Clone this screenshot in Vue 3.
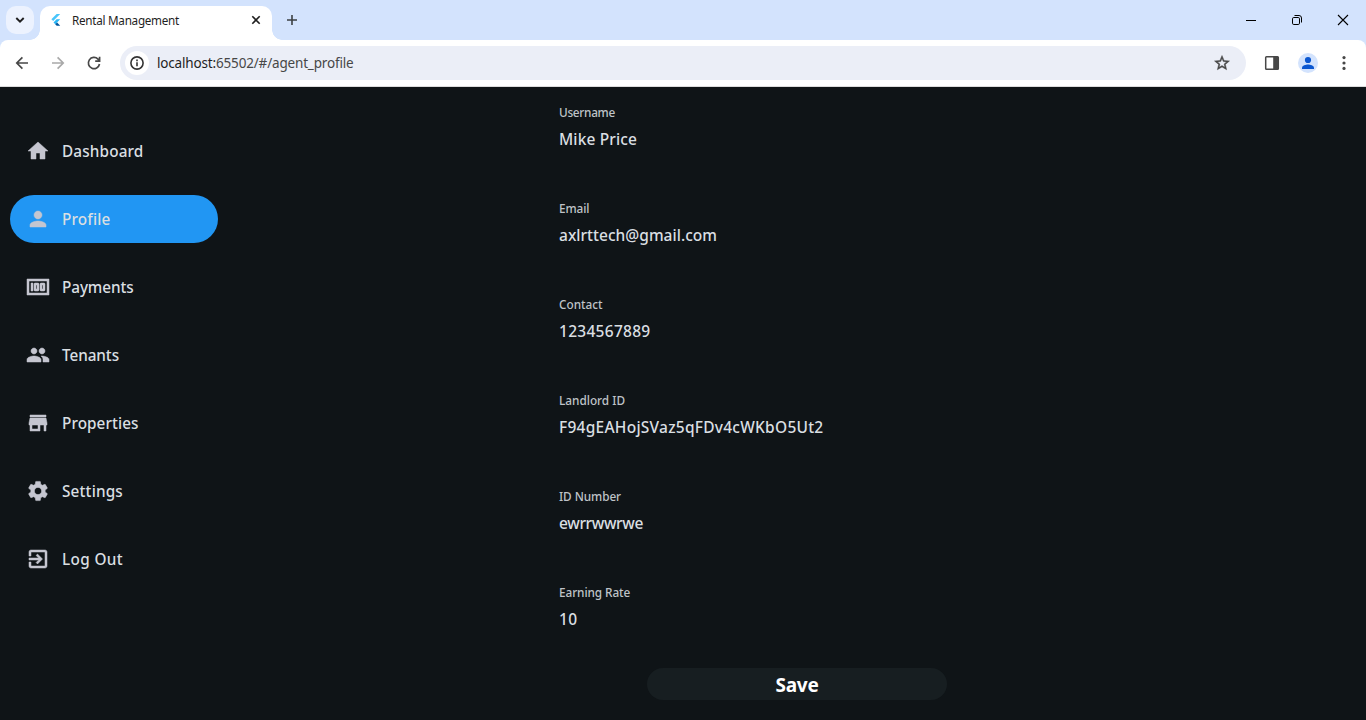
<script setup>
const navItems = [
  { label: 'Dashboard', width: 81.5, icon: 'M10 20v-6h4v6h5v-8h3L12 3 2 12h3v8z' },
  { label: 'Profile', width: 48.5, active: true, icon: 'M12 12c2.21 0 4-1.79 4-4s-1.79-4-4-4-4 1.79-4 4 1.79 4 4 4zm0 2c-2.67 0-8 1.34-8 4v2h16v-2c0-2.66-5.33-4-8-4z' },
  { label: 'Payments', width: 71.5, icon: 'M5 8h2v8H5zm7 0H9c-.55 0-1 .45-1 1v6c0 .55.45 1 1 1h3c.55 0 1-.45 1-1V9c0-.55-.45-1-1-1zm-1 6h-1v-4h1v4zm7-6h-3c-.55 0-1 .45-1 1v6c0 .55.45 1 1 1h3c.55 0 1-.45 1-1V9c0-.55-.45-1-1-1zm-1 6h-1v-4h1v4zM1 4v16h22V4H1zm20 14H3V6h18v12z' },
  { label: 'Tenants', width: 57, icon: 'M16 11c1.66 0 2.99-1.34 2.99-3S17.66 5 16 5s-3 1.34-3 3 1.34 3 3 3zm-8 0c1.66 0 2.99-1.34 2.99-3S9.66 5 8 5 5 6.34 5 8s1.34 3 3 3zm0 2c-2.33 0-7 1.17-7 3.5V19h14v-2.5c0-2.33-4.67-3.5-7-3.5zm8 0c-.29 0-.62.02-.97.05 1.16.84 1.97 1.97 1.97 3.45V19h6v-2.5c0-2.33-4.67-3.5-7-3.5z' },
  { label: 'Properties', width: 76.5, icon: 'M20 4H4v2h16V4zm1 10v-2l-1-5H4l-1 5v2h1v6h10v-6h4v6h2v-6h1zm-9 4H6v-4h6v4z' },
  { label: 'Settings', width: 61, icon: 'M19.14 12.94c.04-.3.06-.61.06-.94 0-.32-.02-.64-.07-.94l2.03-1.58c.18-.14.23-.41.12-.61l-1.92-3.32c-.12-.22-.37-.29-.59-.22l-2.39.96c-.5-.38-1.03-.7-1.62-.94l-.36-2.54c-.04-.24-.24-.41-.48-.41h-3.84c-.24 0-.43.17-.47.41l-.36 2.54c-.59.24-1.13.57-1.62.94l-2.39-.96c-.22-.08-.47 0-.59.22L2.74 8.87c-.12.21-.08.47.12.61l2.03 1.58c-.05.3-.09.63-.09.94s.02.64.07.94l-2.03 1.58c-.18.14-.23.41-.12.61l1.92 3.32c.12.22.37.29.59.22l2.39-.96c.5.38 1.03.7 1.62.94l.36 2.54c.05.24.24.41.48.41h3.84c.24 0 .44-.17.47-.41l.36-2.54c.59-.24 1.13-.56 1.62-.94l2.39.96c.22.08.47 0 .59-.22l1.92-3.32c.12-.22.07-.47-.12-.61l-2.01-1.58zM12 15.6c-1.98 0-3.6-1.62-3.6-3.6s1.62-3.6 3.6-3.6 3.6 1.62 3.6 3.6-1.62 3.6-3.6 3.6z' },
  { label: 'Log Out', width: 61, icon: 'M10.09 15.59 11.5 17l5-5-5-5-1.41 1.41L12.67 11H3v2h9.67l-2.58 2.59zM19 3H5c-1.11 0-2 .9-2 2v4h2V5h14v14H5v-4H3v4c0 1.1.89 2 2 2h14c1.1 0 2-.9 2-2V5c0-1.1-.9-2-2-2z' }
]

const fields = [
  { label: 'Username', labelWidth: 56, value: 'Mike Price', width: 78 },
  { label: 'Email', labelWidth: 30.3, value: 'axlrttech@gmail.com', width: 158 },
  { label: 'Contact', labelWidth: 43.5, value: '1234567889', width: 91.5 },
  { label: 'Landlord ID', labelWidth: 66, value: 'F94gEAHojSVaz5qFDv4cWKbO5Ut2', width: 264.5 },
  { label: 'ID Number', labelWidth: 62, value: 'ewrrwwrwe', width: 84 },
  { label: 'Earning Rate', labelWidth: 71.2, value: '10', width: 18.5 }
]

// Tracks a text run so that it spans the given width.
const vTrack = {
  mounted(el, { value }) {
    const natural = el.getBoundingClientRect().width
    el.style.letterSpacing = `${(value - natural) / el.textContent.length}px`
  }
}
</script>

<template>
  <div class="window">
    <header class="tabstrip">
      <button class="tab-search" aria-label="Search tabs">
        <svg width="10" height="8" viewBox="0 0 10 8"><path d="M1.3 2 5 5.7 8.7 2" fill="none" stroke="#1f1f1f" stroke-width="1.9" /></svg>
      </button>
      <div class="tab">
        <svg class="favicon" width="16" height="16" viewBox="0 0 16 16">
          <path d="M8.6 2h3.6L5.2 9 3.4 7.2z" fill="#47c5fb" />
          <path d="M8.6 7.3h3.6L9.1 10.4 7.3 12.2 5.5 10.4z" fill="#2bb7f6" />
          <path d="m9.1 10.4 3.1 3.3H8.7l-1.5-1.5z" fill="#00569e" />
        </svg>
        <span class="tab-title"><span v-track="107">Rental Management</span></span>
        <svg class="tab-close" width="10" height="10" viewBox="0 0 10 10"><path d="m1.3 1.3 7.4 7.4m0-7.4L1.3 8.7" stroke="#1f1f1f" stroke-width="1.6" /></svg>
      </div>
      <svg class="new-tab" width="12" height="12" viewBox="0 0 12 12"><path d="M6 1v10M1 6h10" stroke="#3c4043" stroke-width="1.6" /></svg>
      <div class="caption">
        <svg width="12" height="12" viewBox="0 0 12 12"><path d="M1 6.5h10" stroke="#000" /></svg>
        <svg width="12" height="12" viewBox="0 0 12 12" fill="none" stroke="#000"><rect x="1.5" y="3.5" width="7" height="7" rx="1.3" /><path d="M3.5 1.5H8A2.5 2.5 0 0 1 10.5 4v4.5" /></svg>
        <svg width="12" height="12" viewBox="0 0 12 12"><path d="m1 1 10 10M11 1 1 11" stroke="#000" stroke-width="1.1" /></svg>
      </div>
    </header>

    <div class="toolbar">
      <div class="nav-buttons">
        <svg width="16" height="16" viewBox="0 0 16 16" fill="none" stroke="#474747" stroke-width="1.7"><path d="M14 8H3m5.4-5.6L2.8 8l5.6 5.6" /></svg>
        <svg width="16" height="16" viewBox="0 0 16 16" fill="none" stroke="#a9a9a9" stroke-width="1.7"><path d="M2 8h11M7.6 2.4 13.2 8l-5.6 5.6" /></svg>
        <svg width="16" height="16" viewBox="0 0 16 16" fill="none" stroke="#474747" stroke-width="1.7"><path d="M13.5 9A5.6 5.6 0 1 1 12 4.1l1.3 1.3M13.6 1.7v4.4H9.2" /></svg>
      </div>
      <div class="omnibox">
        <span class="site-info">
          <svg width="16" height="16" viewBox="0 0 16 16"><circle cx="8" cy="8" r="6.1" fill="none" stroke="#333" stroke-width="1.6" /><path d="M8 7.2v4.1M8 4.5v1.7" stroke="#333" stroke-width="1.6" /></svg>
        </span>
        <span class="url"><span v-track="196.5">localhost:<span class="path">65502/#/agent_profile</span></span></span>
        <svg class="star" width="18" height="18" viewBox="0 0 24 24" fill="#474747"><path d="m22 9.24-7.19-.62L12 2 9.19 8.63 2 9.24l5.46 4.73L5.82 21 12 17.27 18.18 21l-1.63-7.03L22 9.24zM12 15.4l-3.76 2.27 1-4.28-3.32-2.88 4.38-.38L12 6.1l1.71 4.04 4.38.38-3.32 2.88 1 4.28L12 15.4z" stroke="#474747" stroke-width=".6" /></svg>
      </div>
      <svg class="panel-icon" width="16" height="16" viewBox="0 0 16 16"><rect x="1.7" y="1.7" width="12.6" height="12.6" rx=".8" fill="none" stroke="#474747" stroke-width="1.5" /><path d="M9.2 1.5h5v13h-5z" fill="#474747" /></svg>
      <svg class="avatar" width="20" height="20" viewBox="0 0 20 20"><circle cx="10" cy="10" r="10" fill="#d3e3fd" /><circle cx="10" cy="7" r="3.1" fill="#0b57d0" /><path d="M4 16v-1.2c0-2.3 3.9-3.3 6-3.3s6 1 6 3.3V16z" fill="#0b57d0" /></svg>
      <svg class="more" width="4" height="16" viewBox="0 0 4 16" fill="#474747"><circle cx="2" cy="2.6" r="1.6" /><circle cx="2" cy="8" r="1.6" /><circle cx="2" cy="13.4" r="1.6" /></svg>
    </div>

    <main class="app">
      <nav class="sidebar">
        <a v-for="item in navItems" :key="item.label" class="nav-item" :class="{ active: item.active }">
          <svg width="24" height="24" viewBox="0 0 24 24" fill="currentColor" stroke="currentColor" stroke-width=".5"><path :d="item.icon" /></svg>
          <span v-track="item.width">{{ item.label }}</span>
        </a>
      </nav>
      <section class="profile">
        <div v-for="field in fields" :key="field.label" class="field">
          <div class="field-label"><span v-track="field.labelWidth">{{ field.label }}</span></div>
          <div class="field-value"><span v-track="field.width">{{ field.value }}</span></div>
        </div>
        <button class="save"><span v-track="43">Save</span></button>
      </section>
    </main>
  </div>
</template>

<style>
body { margin: 0; overflow: hidden; }
</style>

<style scoped>
* { box-sizing: border-box; }
.window {
  display: flex;
  flex-direction: column;
  width: 1366px;
  height: 720px;
  overflow: hidden;
  font-family: "Noto Sans", "Open Sans", sans-serif;
  white-space: nowrap;
}
svg { display: block; flex: none; }
button { border: 0; padding: 0; font: inherit; }
.tabstrip {
  display: flex;
  align-items: center;
  height: 40px;
  flex: none;
  padding-left: 6px;
  background: #d3e3fd;
}
.tab-search {
  display: grid;
  place-items: center;
  width: 28px;
  height: 28px;
  border-radius: 10px;
  background: #ecf2fe;
}
.tab {
  position: relative;
  display: flex;
  align-items: center;
  align-self: flex-end;
  width: 232px;
  height: 34px;
  margin-left: 6px;
  padding: 0 11px 6px 8px;
  border-radius: 10px 10px 0 0;
  background: #fff;
}
.tab::before, .tab::after {
  content: "";
  position: absolute;
  bottom: 0;
  width: 10px;
  height: 10px;
}
.tab::before { left: -10px; background: radial-gradient(circle at 0 0, transparent 9.5px, #fff 10px); }
.tab::after { right: -10px; background: radial-gradient(circle at 100% 0, transparent 9.5px, #fff 10px); }
.tab-title { flex: 1; margin-left: 8px; font-size: 11.7px; line-height: 16px; color: #1f1f1f; }
.new-tab { margin-left: 14px; }
.caption { display: flex; gap: 34px; margin-left: auto; margin-right: 17px; }
.toolbar {
  display: flex;
  align-items: center;
  height: 47px;
  flex: none;
  padding: 0 20px 0 14px;
  border-bottom: 1px solid #dcdcdc;
  border-radius: 8px 8px 0 0;
  background: #fff;
  box-shadow: 0 -10px 0 #d3e3fd;
  clip-path: inset(0);
}
.nav-buttons { display: flex; gap: 20px; }
.omnibox {
  display: flex;
  align-items: center;
  width: 1126px;
  height: 34px;
  margin-left: 18px;
  padding: 0 15px 0 5px;
  border-radius: 17px;
  background: #ebeef7;
}
.site-info { display: grid; place-items: center; width: 24px; height: 24px; border-radius: 50%; background: #fff; }
.url { flex: 1; margin-left: 8px; font-size: 13.5px; line-height: 20px; color: #1f1f1f; }
.path { color: #474747; }
.panel-icon { margin-left: 18px; }
.avatar { margin-left: 18px; }
.more { margin-left: 24px; }
.app {
  display: flex;
  flex: 1;
  min-height: 0;
  background: #0f1417;
  color: #dadfe2;
}
.sidebar {
  display: flex;
  flex-direction: column;
  gap: 20px;
  width: 228px;
  padding: 40px 10px 0;
}
.nav-item {
  display: flex;
  align-items: center;
  gap: 12px;
  height: 48px;
  padding-left: 16px;
  border-radius: 24px;
  font-size: 15.3px;
  font-weight: 500;
}
.nav-item svg { color: #c5c6d0; }
.active { background: #2196f3; }
.profile { width: 478px; margin-left: 331px; padding-top: 15px; }
.field { height: 96px; }
.field-label { height: 20px; font-size: 11.8px; line-height: 20px; color: #bfc3c8; font-weight: 500; }
.field-value { margin-top: 5px; height: 24px; font-size: 15.5px; line-height: 24px; font-weight: 500; }
.save {
  display: grid;
  place-items: center;
  width: 300px;
  height: 32px;
  margin: -10px 0 0 88px;
  padding-top: 2px;
  border-radius: 16px;
  background: #171e21;
  color: #fff;
  font-size: 19px;
  font-weight: 700;
  line-height: 30px;
}
</style>
